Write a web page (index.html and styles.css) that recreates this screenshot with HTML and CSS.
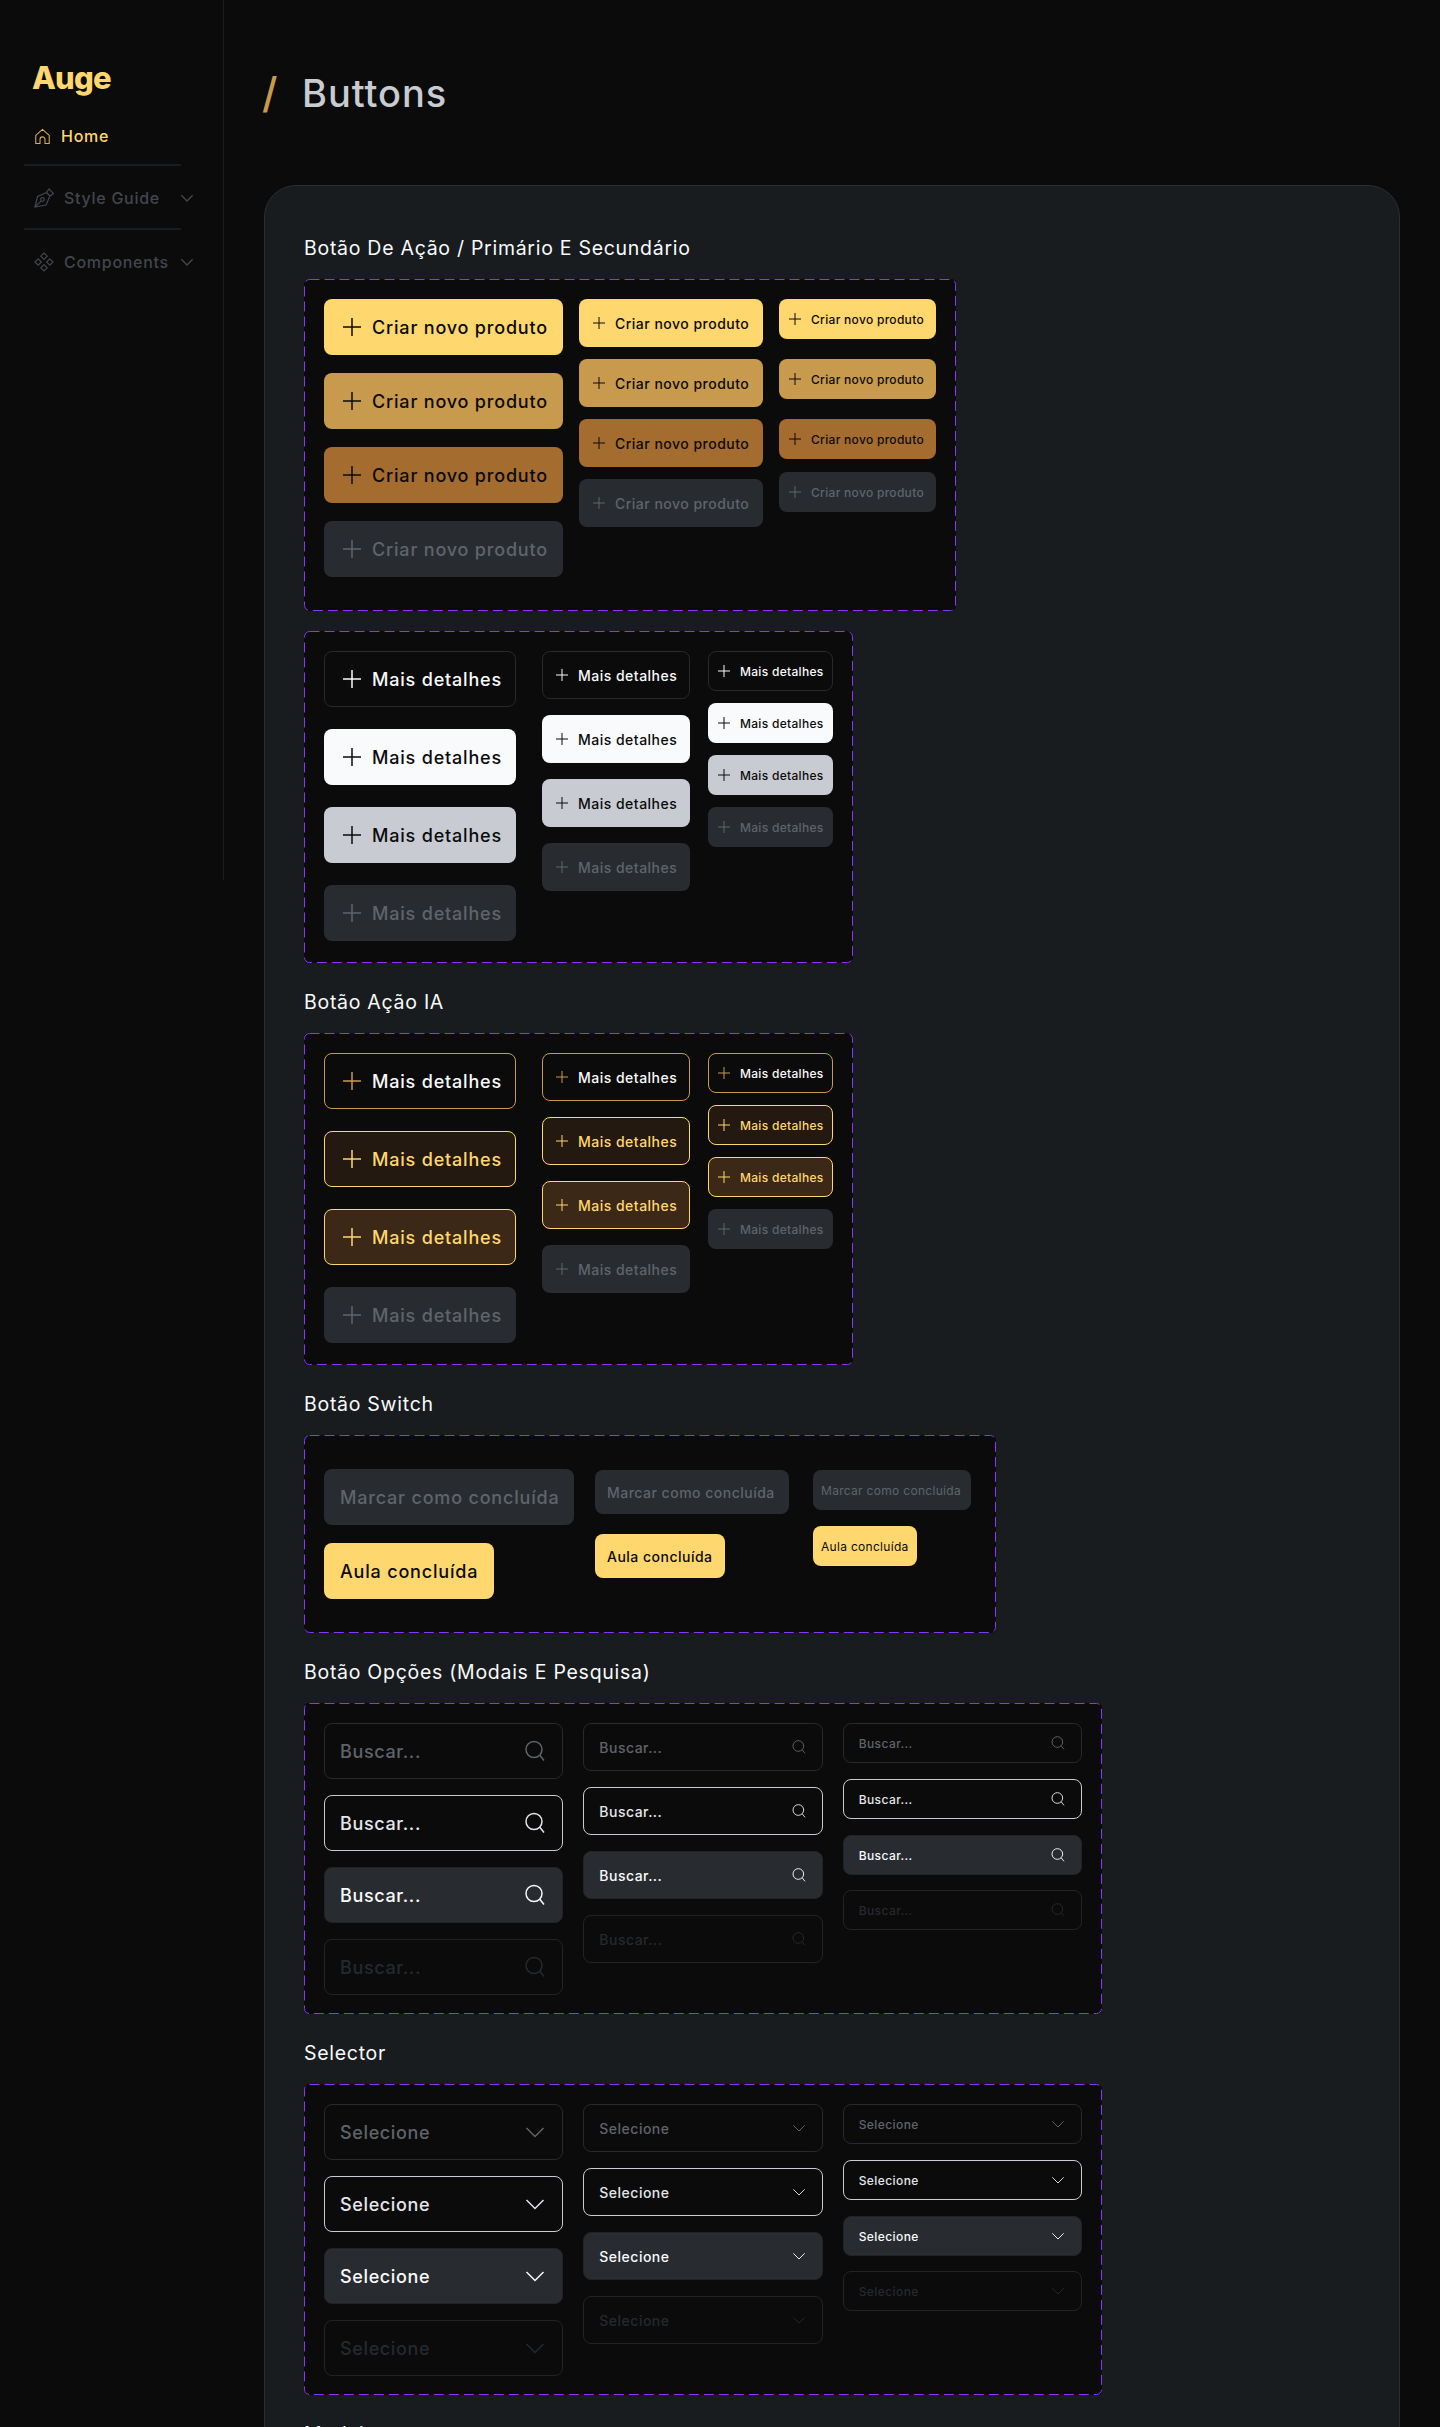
FILE: index.html
```html
<!DOCTYPE html>
<html lang="pt-BR">
<head>
  <meta charset="UTF-8" />
  <meta name="viewport" content="width=device-width, initial-scale=1.0"/>
  <title>Auge - Buttons</title>
  <link rel="stylesheet" href="styles.css">
</head>
<body>

  <!-- Shared icons -->
  <svg class="sprite" aria-hidden="true">
    <symbol id="i-plus" viewBox="0 0 24 24"><path d="M12 3v18M3 12h18"/></symbol>
    <symbol id="i-search" viewBox="0 0 24 24"><circle cx="11" cy="10.5" r="8"/><path d="M16.8 16.3 21 21.5"/></symbol>
    <symbol id="i-chevron" viewBox="0 0 24 24"><path d="M3.5 8 12 16.5 20.5 8"/></symbol>
    <symbol id="i-home" viewBox="0 0 24 24"><path d="M2.5 10.5 12 2l9.5 8.500V22H15.500v-6a3.500 3.500 0 0 0-7 0v6H2.500z"/></symbol>
    <symbol id="i-pen" viewBox="0 0 20 20"><path d="M1 19 3.500 8.500 12.500 4.500 15 1 19.500 5.500 16 8 12 17z"/><path d="M12.500 4.500 16 8"/><circle cx="8.500" cy="11.500" r="1.800"/><path d="M1 19 7.200 12.800"/></symbol>
    <symbol id="i-comp" viewBox="0 0 20 20"><path d="M10 1l3.200 3.200L10 7.400 6.800 4.200zM4.200 6.800l3.200 3.200-3.200 3.200L1 10zM15.800 6.800 19 10l-3.200 3.200-3.200-3.200zM10 12.600l3.200 3.200L10 19l-3.200-3.200z"/></symbol>
  </svg>

  <!-- Sidebar -->
  <aside class="sidebar">
    <div class="logo">Auge</div>
    <nav class="nav">
      <a class="nav-row nav-row-home">
        <svg class="icon nav-icon-home"><use href="#i-home"/></svg>
        <span>Home</span>
      </a>
      <div class="nav-divider"></div>
      <a class="nav-row">
        <svg class="icon nav-icon"><use href="#i-pen"/></svg>
        <span>Style Guide</span>
        <svg class="icon nav-chevron"><use href="#i-chevron"/></svg>
      </a>
      <div class="nav-divider"></div>
      <a class="nav-row">
        <svg class="icon nav-icon"><use href="#i-comp"/></svg>
        <span>Components</span>
        <svg class="icon nav-chevron"><use href="#i-chevron"/></svg>
      </a>
    </nav>
  </aside>

  <main class="main">
    <header class="page-head">
      <span class="slash">/</span>
      <h1>Buttons</h1>
    </header>

    <section class="panel">

      <h2>Botão De Ação / Primário E Secundário</h2>
      <div class="box box-action">
        <svg class="dash"><rect/></svg>
        <div class="col col-l">
          <button class="btn btn-l primary"><svg class="icon"><use href="#i-plus"/></svg>Criar novo produto</button>
          <button class="btn btn-l primary-hover"><svg class="icon"><use href="#i-plus"/></svg>Criar novo produto</button>
          <button class="btn btn-l primary-pressed"><svg class="icon"><use href="#i-plus"/></svg>Criar novo produto</button>
          <button class="btn btn-l disabled"><svg class="icon"><use href="#i-plus"/></svg>Criar novo produto</button>
        </div>
        <div class="col col-m">
          <button class="btn btn-m primary"><svg class="icon"><use href="#i-plus"/></svg>Criar novo produto</button>
          <button class="btn btn-m primary-hover"><svg class="icon"><use href="#i-plus"/></svg>Criar novo produto</button>
          <button class="btn btn-m primary-pressed"><svg class="icon"><use href="#i-plus"/></svg>Criar novo produto</button>
          <button class="btn btn-m disabled"><svg class="icon"><use href="#i-plus"/></svg>Criar novo produto</button>
        </div>
        <div class="col col-s">
          <button class="btn btn-s primary"><svg class="icon"><use href="#i-plus"/></svg>Criar novo produto</button>
          <button class="btn btn-s primary-hover"><svg class="icon"><use href="#i-plus"/></svg>Criar novo produto</button>
          <button class="btn btn-s primary-pressed"><svg class="icon"><use href="#i-plus"/></svg>Criar novo produto</button>
          <button class="btn btn-s disabled"><svg class="icon"><use href="#i-plus"/></svg>Criar novo produto</button>
        </div>
      </div>

      <div class="box box-more box-next">
        <svg class="dash"><rect/></svg>
        <div class="col col-l">
          <button class="btn btn-l outline"><svg class="icon"><use href="#i-plus"/></svg>Mais detalhes</button>
          <button class="btn btn-l light"><svg class="icon"><use href="#i-plus"/></svg>Mais detalhes</button>
          <button class="btn btn-l gray"><svg class="icon"><use href="#i-plus"/></svg>Mais detalhes</button>
          <button class="btn btn-l disabled"><svg class="icon"><use href="#i-plus"/></svg>Mais detalhes</button>
        </div>
        <div class="col col-m">
          <button class="btn btn-m outline"><svg class="icon"><use href="#i-plus"/></svg>Mais detalhes</button>
          <button class="btn btn-m light"><svg class="icon"><use href="#i-plus"/></svg>Mais detalhes</button>
          <button class="btn btn-m gray"><svg class="icon"><use href="#i-plus"/></svg>Mais detalhes</button>
          <button class="btn btn-m disabled"><svg class="icon"><use href="#i-plus"/></svg>Mais detalhes</button>
        </div>
        <div class="col col-s">
          <button class="btn btn-s outline"><svg class="icon"><use href="#i-plus"/></svg>Mais detalhes</button>
          <button class="btn btn-s light"><svg class="icon"><use href="#i-plus"/></svg>Mais detalhes</button>
          <button class="btn btn-s gray"><svg class="icon"><use href="#i-plus"/></svg>Mais detalhes</button>
          <button class="btn btn-s disabled"><svg class="icon"><use href="#i-plus"/></svg>Mais detalhes</button>
        </div>
      </div>

      <h2>Botão Ação IA</h2>
      <div class="box box-more">
        <svg class="dash"><rect/></svg>
        <div class="col col-l">
          <button class="btn btn-l ia"><svg class="icon"><use href="#i-plus"/></svg>Mais detalhes</button>
          <button class="btn btn-l ia-hover"><svg class="icon"><use href="#i-plus"/></svg>Mais detalhes</button>
          <button class="btn btn-l ia-pressed"><svg class="icon"><use href="#i-plus"/></svg>Mais detalhes</button>
          <button class="btn btn-l disabled"><svg class="icon"><use href="#i-plus"/></svg>Mais detalhes</button>
        </div>
        <div class="col col-m">
          <button class="btn btn-m ia"><svg class="icon"><use href="#i-plus"/></svg>Mais detalhes</button>
          <button class="btn btn-m ia-hover"><svg class="icon"><use href="#i-plus"/></svg>Mais detalhes</button>
          <button class="btn btn-m ia-pressed"><svg class="icon"><use href="#i-plus"/></svg>Mais detalhes</button>
          <button class="btn btn-m disabled"><svg class="icon"><use href="#i-plus"/></svg>Mais detalhes</button>
        </div>
        <div class="col col-s">
          <button class="btn btn-s ia"><svg class="icon"><use href="#i-plus"/></svg>Mais detalhes</button>
          <button class="btn btn-s ia-hover"><svg class="icon"><use href="#i-plus"/></svg>Mais detalhes</button>
          <button class="btn btn-s ia-pressed"><svg class="icon"><use href="#i-plus"/></svg>Mais detalhes</button>
          <button class="btn btn-s disabled"><svg class="icon"><use href="#i-plus"/></svg>Mais detalhes</button>
        </div>
      </div>

      <h2>Botão Switch</h2>
      <div class="box box-switch">
        <svg class="dash"><rect/></svg>
        <div class="col col-l">
          <button class="btn btn-l disabled mark">Marcar como concluída</button>
          <button class="btn btn-l primary done">Aula concluída</button>
        </div>
        <div class="col col-m">
          <button class="btn btn-m disabled mark">Marcar como concluída</button>
          <button class="btn btn-m primary done">Aula concluída</button>
        </div>
        <div class="col col-s">
          <button class="btn btn-s btn-thin disabled mark">Marcar como concluída</button>
          <button class="btn btn-s btn-thin primary done">Aula concluída</button>
        </div>
      </div>

      <h2>Botão Opções (Modais E Pesquisa)</h2>
      <div class="box box-fields">
        <svg class="dash"><rect/></svg>
        <div class="col col-l">
          <div class="field field-l">Buscar...<svg class="icon"><use href="#i-search"/></svg></div>
          <div class="field field-l is-hover">Buscar...<svg class="icon"><use href="#i-search"/></svg></div>
          <div class="field field-l is-active">Buscar...<svg class="icon"><use href="#i-search"/></svg></div>
          <div class="field field-l is-disabled">Buscar...<svg class="icon"><use href="#i-search"/></svg></div>
        </div>
        <div class="col col-m">
          <div class="field field-m">Buscar...<svg class="icon"><use href="#i-search"/></svg></div>
          <div class="field field-m is-hover">Buscar...<svg class="icon"><use href="#i-search"/></svg></div>
          <div class="field field-m is-active">Buscar...<svg class="icon"><use href="#i-search"/></svg></div>
          <div class="field field-m is-disabled">Buscar...<svg class="icon"><use href="#i-search"/></svg></div>
        </div>
        <div class="col col-s">
          <div class="field field-s">Buscar...<svg class="icon"><use href="#i-search"/></svg></div>
          <div class="field field-s is-hover">Buscar...<svg class="icon"><use href="#i-search"/></svg></div>
          <div class="field field-s is-active">Buscar...<svg class="icon"><use href="#i-search"/></svg></div>
          <div class="field field-s is-disabled">Buscar...<svg class="icon"><use href="#i-search"/></svg></div>
        </div>
      </div>

      <h2>Selector</h2>
      <div class="box box-fields">
        <svg class="dash"><rect/></svg>
        <div class="col col-l">
          <div class="field field-l">Selecione<svg class="icon"><use href="#i-chevron"/></svg></div>
          <div class="field field-l is-hover">Selecione<svg class="icon"><use href="#i-chevron"/></svg></div>
          <div class="field field-l is-active">Selecione<svg class="icon"><use href="#i-chevron"/></svg></div>
          <div class="field field-l is-disabled">Selecione<svg class="icon"><use href="#i-chevron"/></svg></div>
        </div>
        <div class="col col-m">
          <div class="field field-m">Selecione<svg class="icon"><use href="#i-chevron"/></svg></div>
          <div class="field field-m is-hover">Selecione<svg class="icon"><use href="#i-chevron"/></svg></div>
          <div class="field field-m is-active">Selecione<svg class="icon"><use href="#i-chevron"/></svg></div>
          <div class="field field-m is-disabled">Selecione<svg class="icon"><use href="#i-chevron"/></svg></div>
        </div>
        <div class="col col-s">
          <div class="field field-s">Selecione<svg class="icon"><use href="#i-chevron"/></svg></div>
          <div class="field field-s is-hover">Selecione<svg class="icon"><use href="#i-chevron"/></svg></div>
          <div class="field field-s is-active">Selecione<svg class="icon"><use href="#i-chevron"/></svg></div>
          <div class="field field-s is-disabled">Selecione<svg class="icon"><use href="#i-chevron"/></svg></div>
        </div>
      </div>

      <h2>Modal</h2>
    </section>
  </main>

</body>
</html>
```

FILE: styles.css
```css
* {
  margin: 0;
  padding: 0;
  box-sizing: border-box;
}

body {
  font-family: Inter, "Noto Sans", sans-serif;
  letter-spacing: 0.045em;
  background-color: #0b0b0c;
  color: #f9fafb;
  height: 100vh;
  overflow: hidden;
  display: flex;
  align-items: flex-start;
}

.sprite {
  display: none;
}

.icon {
  flex-shrink: 0;
  fill: none;
  stroke: currentColor;
  stroke-width: 1.5;
}

/* Sidebar */
.sidebar {
  width: 224px;
  height: 880px;
  flex-shrink: 0;
  padding: 58px 0 0 24px;
  border-right: 1px solid #1a1d20;
}

.logo {
  height: 40px;
  margin: 0 0 24px 8px;
  font-size: 31px;
  line-height: 40px;
  font-weight: 800;
  letter-spacing: -0.025em;
  color: #ffd76f;
}

.nav {
  width: 168px;
}

.nav-row {
  display: flex;
  align-items: center;
  height: 32px;
  padding-left: 10px;
  font-size: 16px;
  font-weight: 500;
  color: #42464c;
}

.nav-row-home {
  height: 28px;
  color: #ffd76f;
}

.nav-icon-home {
  width: 17px;
  height: 17px;
  margin-right: 10px;
  color: #d9ad5c;
}

.nav-icon {
  width: 20px;
  height: 20px;
  margin-right: 10px;
  stroke-width: 1.2;
}

.nav-chevron {
  width: 16px;
  height: 16px;
  margin-left: auto;
  margin-right: -3px;
  stroke-width: 2;
}

.nav-divider {
  width: 157px;
  height: 2px;
  margin: 14px 0 16px;
  background: #1a1d20;
}

/* Page */
.main {
  flex: 1;
  padding-left: 40px;
}

.page-head {
  display: flex;
  align-items: center;
  height: 185px;
}

.slash {
  width: 39px;
  margin-left: -2px;
  margin-right: 1px;
  font-size: 42px;
  font-weight: 500;
  color: #c89a4e;
}

h1 {
  font-size: 38px;
  font-weight: 500;
  letter-spacing: 0.025em;
  color: #c8ccd2;
}

.panel {
  width: 1136px;
  padding: 50px 0 0 39px;
  background: #181c1f;
  border: 1px solid #2a2e33;
  border-radius: 32px;
}

h2 {
  margin: 27px 0 19px;
  font-size: 19.500px;
  line-height: 24px;
  font-weight: 400;
}

h2:first-child {
  margin-top: 0;
}

/* Dashed boxes */
.box {
  position: relative;
  display: flex;
  padding: 20px;
  background: #0b0b0c;
  border-radius: 5px;
}

.box-next {
  margin-top: 20px;
}

.dash {
  position: absolute;
  top: 0;
  left: 0;
  width: 100%;
  height: 100%;
  pointer-events: none;
}

.dash rect {
  x: 0.5px;
  y: 0.5px;
  width: calc(100% - 1px);
  height: calc(100% - 1px);
  rx: 5px;
  fill: none;
  stroke: #8b34ff;
  stroke-dasharray: 10 5;
}

.col {
  display: flex;
  flex-direction: column;
  align-items: flex-start;
}

.box-action {
  width: 652px;
  height: 332px;
  gap: 16px;
}

.box-action .col-l { width: 239px; gap: 18px; }
.box-action .col-m { width: 184px; gap: 12px; }
.box-action .col-s { width: 157px; gap: 20px; }
.box-action .col-s .disabled { margin-top: -7px; }

.box-more {
  width: 549px;
  height: 332px;
}

.box-more .col-l { width: 192px; gap: 22px; margin-right: 26px; }
.box-more .col-m { width: 148px; gap: 16px; margin-right: 18px; }
.box-more .col-s { width: 125px; gap: 12px; }

.box-action .btn,
.box-more .btn {
  width: 100%;
}

.box-switch {
  width: 692px;
  height: 198px;
  padding-top: 34px;
}

.box-switch .col-l { width: 250px; gap: 18px; margin-right: 21px; }
.box-switch .col-m { width: 194px; gap: 20px; margin: 1px 24px 0 0; }
.box-switch .col-s { width: 158px; gap: 16px; margin-top: 1px; }
.box-switch .mark { width: 100%; }

.box-fields {
  display: grid;
  grid-template-columns: repeat(3, 1fr);
  column-gap: 20px;
  width: 798px;
  height: 311px;
}

.box-fields .col {
  align-items: stretch;
  gap: 16px;
}

.box-fields .col-s .is-disabled {
  margin-top: -1px;
}

/* Buttons */
.btn {
  display: flex;
  align-items: center;
  flex-shrink: 0;
  gap: 8px;
  font-family: inherit;
  font-weight: 500;
  white-space: nowrap;
  border: 1px solid transparent;
  border-radius: 8px;
}

.btn-l { height: 56px; padding: 0 15px; font-size: 18px; letter-spacing: 0.045em; }
.btn-m { height: 48px; padding: 0 11px; font-size: 14px; letter-spacing: 0.035em; }
.btn-s { height: 40px; padding: 0 7px; font-size: 12px; letter-spacing: 0.025em; }
.box-switch .btn-m { height: 44px; }
.btn-thin { font-weight: 400; }

.btn-l .icon { width: 24px; height: 24px; }
.btn-m .icon,
.btn-s .icon { width: 16px; height: 16px; }

.primary { background: #ffd76f; color: #0b0b0c; }
.primary-hover { background: #c89a4e; color: #0b0b0c; }
.primary-pressed { background: #a56c30; color: #0b0b0c; }
.disabled { background: #282c30; color: #5f646b; }

.outline { background: #0b0b0c; color: #f9fafb; border-color: #26292d; }
.light { background: #f9fafc; color: #0b0b0c; }
.gray { background: #c8ccd2; color: #0b0b0c; }

.ia { background: #0b0b0c; color: #f9fafb; border-color: #c89a4e; }
.ia .icon { color: #c89a4e; }
.ia-hover { background: #231910; color: #ffd76f; border-color: #ffd76f; }
.ia-pressed { background: #3c2816; color: #ffd76f; border-color: #ffd76f; }

/* Search and select fields */
.field {
  display: flex;
  align-items: center;
  justify-content: space-between;
  padding: 0 15px;
  font-weight: 500;
  letter-spacing: 0.035em;
  color: #5f646b;
  background: #0b0b0c;
  border: 1px solid #26292d;
  border-radius: 8px;
}

.field-l { height: 56px; font-size: 18px; }
.field-m { height: 48px; font-size: 14px; }
.field-s { height: 40px; font-size: 12px; }

.field-l .icon { width: 24px; height: 24px; }
.field-m .icon,
.field-s .icon { width: 16px; height: 16px; stroke-width: 1.400; }

.is-hover { color: #e4e6e9; border-color: #c8ccd2; }
.is-active { color: #f9fafb; background: #282c30; border-color: #212427; }
.is-disabled { color: #26292d; border-color: #212427; }
```
